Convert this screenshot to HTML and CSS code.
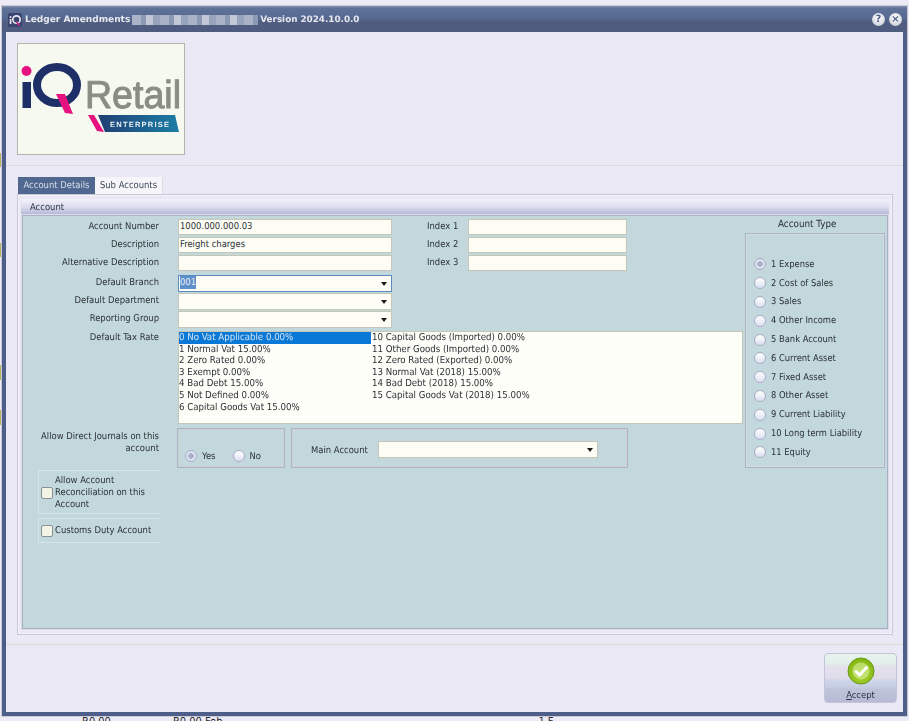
FILE: index.html
```html
<!DOCTYPE html>
<html lang="en">
<head>
<meta charset="utf-8">
<title>Ledger Amendments</title>
<link rel="stylesheet" href="styles.css">
</head>
<body>
<div class="window">
  <header class="titlebar">
    <svg class="app-icon" viewBox="0 0 14 14" width="14" height="14"><rect width="14" height="14" rx="2" fill="#3b4470"/><circle cx="2.5" cy="4" r="1" fill="#e8e8f0"/><rect x="1.7" y="6" width="1.7" height="5" fill="#e8e8f0"/><circle cx="8.5" cy="6.5" r="3.7" fill="none" stroke="#e8e8f0" stroke-width="1.7"/><path d="M8 9l2 3.5h2l-2-3.5z" fill="#e0218a"/></svg>
    <span class="title-text">Ledger Amendments</span>
    <span class="title-blur"></span>
    <span class="title-text title-version">Version 2024.10.0.0</span>
    <span class="title-btn title-help">?</span>
    <span class="title-btn title-close">×</span>
  </header>

  <section class="logo-area">
    <div class="logo">
      <svg viewBox="0 0 166 110" width="166" height="110">
        <defs>
          <linearGradient id="ban" x1="0" x2="1" y1="0" y2="0"><stop offset="0" stop-color="#203f74"/><stop offset="1" stop-color="#1c7ea5"/></linearGradient>
        </defs>
        <circle cx="8.500" cy="27" r="5" fill="#e6127f"/>
        <rect x="4.500" y="38" width="8.500" height="26" fill="#1d2f66"/>
        <ellipse cx="39" cy="41" rx="20" ry="18" fill="none" stroke="#1d2f66" stroke-width="8"/>
        <polygon points="38,50 47,50 55,70 47,69" fill="#e6127f"/>
        <text class="logo-retail" x="67" y="64" textLength="96" lengthAdjust="spacingAndGlyphs">Retail</text>
        <polygon points="70,71 76,71 86,88 79,87" fill="#e6127f"/>
        <polygon points="80,71 157,71 161,88 87,88" fill="url(#ban)"/>
        <text class="logo-ent" x="92" y="82.500" textLength="59">ENTERPRISE</text>
      </svg>
    </div>
  </section>

  <section class="content">
    <nav class="tabs">
      <span class="tab tab-active">Account Details</span>
      <span class="tab">Sub Accounts</span>
    </nav>
    <div class="tab-box">
      <div class="band">Account</div>
      <div class="panel">
        <div class="col-main">
          <div class="row">
            <label class="lbl">Account Number</label>
            <div class="input">1000.000.000.03</div>
            <label class="idx-lbl">Index 1</label>
            <div class="input input-idx"></div>
          </div>
          <div class="row">
            <label class="lbl">Description</label>
            <div class="input">Freight charges</div>
            <label class="idx-lbl">Index 2</label>
            <div class="input input-idx"></div>
          </div>
          <div class="row">
            <label class="lbl">Alternative Description</label>
            <div class="input"></div>
            <label class="idx-lbl">Index 3</label>
            <div class="input input-idx"></div>
          </div>
          <div class="row row-select row-first-select">
            <label class="lbl">Default Branch</label>
            <div class="input select focused"><span class="sel-text">001</span><i class="caret"></i></div>
          </div>
          <div class="row row-select">
            <label class="lbl">Default Department</label>
            <div class="input select"><i class="caret"></i></div>
          </div>
          <div class="row row-select">
            <label class="lbl">Reporting Group</label>
            <div class="input select"><i class="caret"></i></div>
          </div>
          <div class="row row-list">
            <label class="lbl">Default Tax Rate</label>
            <div class="listbox">
              <div class="list-item list-selected">0 No Vat Applicable 0.00%</div>
              <div class="list-item">10 Capital Goods (Imported) 0.00%</div>
              <div class="list-item">1 Normal Vat 15.00%</div>
              <div class="list-item">11 Other Goods (Imported) 0.00%</div>
              <div class="list-item">2 Zero Rated 0.00%</div>
              <div class="list-item">12 Zero Rated (Exported) 0.00%</div>
              <div class="list-item">3 Exempt 0.00%</div>
              <div class="list-item">13 Normal Vat (2018) 15.00%</div>
              <div class="list-item">4 Bad Debt 15.00%</div>
              <div class="list-item">14 Bad Debt (2018) 15.00%</div>
              <div class="list-item">5 Not Defined 0.00%</div>
              <div class="list-item">15 Capital Goods Vat (2018) 15.00%</div>
              <div class="list-item">6 Capital Goods Vat 15.00%</div>
            </div>
          </div>
          <div class="row row-groups">
            <label class="lbl lbl-wrap">Allow Direct Journals on this account</label>
            <div class="group group-yn">
              <span class="radio-item"><i class="radio radio-on"></i>Yes</span>
              <span class="radio-item"><i class="radio"></i>No</span>
            </div>
            <div class="group group-main">
              <label class="main-lbl">Main Account</label>
              <div class="input select input-main"><i class="caret"></i></div>
            </div>
          </div>
          <div class="check-box check-tall"><i class="check"></i><span>Allow Account Reconciliation on this Account</span></div>
          <div class="check-box check-short"><i class="check"></i><span>Customs Duty Account</span></div>
        </div>
        <aside class="col-type">
          <div class="type-title">Account Type</div>
          <div class="type-box">
            <div class="type-item"><i class="radio radio-on"></i>1 Expense</div>
            <div class="type-item"><i class="radio"></i>2 Cost of Sales</div>
            <div class="type-item"><i class="radio"></i>3 Sales</div>
            <div class="type-item"><i class="radio"></i>4 Other Income</div>
            <div class="type-item"><i class="radio"></i>5 Bank Account</div>
            <div class="type-item"><i class="radio"></i>6 Current Asset</div>
            <div class="type-item"><i class="radio"></i>7 Fixed Asset</div>
            <div class="type-item"><i class="radio"></i>8 Other Asset</div>
            <div class="type-item"><i class="radio"></i>9 Current Liability</div>
            <div class="type-item"><i class="radio"></i>10 Long term Liability</div>
            <div class="type-item"><i class="radio"></i>11 Equity</div>
          </div>
        </aside>
      </div>
    </div>
  </section>

  <footer class="footer">
    <button class="accept" type="button">
      <svg viewBox="0 0 28 28" width="28" height="28">
        <defs>
          <radialGradient id="gr" cx="0.5" cy="0.6" r="0.6"><stop offset="0" stop-color="#b4dc3a"/><stop offset="1" stop-color="#7fb30f"/></radialGradient>
        </defs>
        <circle cx="14" cy="14" r="13" fill="url(#gr)" stroke="#6b9a1a"/>
        <circle cx="14" cy="14" r="8.500" fill="#cfe88a" opacity="0.7"/>
        <path d="M9 14.500l3.500 3.500 7-7.500" fill="none" stroke="#fff" stroke-width="3" stroke-linecap="round" stroke-linejoin="round"/>
      </svg>
      <span><u>A</u>ccept</span>
    </button>
  </footer>
</div>
<div class="under">
  <span class="under-a">R0.00</span>
  <span class="under-b">R0.00 Feb</span>
  <span class="under-c">1 F</span>
</div>
</body>
</html>
```
FILE: styles.css
```css
html, body { margin: 0; padding: 0; }
body {
  width: 909px;
  height: 721px;
  overflow: hidden;
  background:
    linear-gradient(transparent 153px, #b8b25e 153px 167px, transparent 167px 243px, #b8b25e 243px 257px, transparent 257px 365px, #b8b25e 365px 380px, transparent 380px 410px, #b8b25e 410px 425px, transparent 425px) 0 0 / 2px 721px no-repeat,
    #ecebf6;
  font-family: "DejaVu Sans Condensed", "DejaVu Sans", sans-serif;
  font-size: 9.400px;
  text-rendering: geometricPrecision;
  color: #2b3135;
}
i { display: block; font-style: normal; }

.window {
  box-sizing: border-box;
  width: 905px;
  height: 710px;
  margin: 6px 0 0 2px;
  border: solid #4d5e88;
  border-width: 0 4px 4px 4px;
  box-shadow: 0 0 0 1px #c9c9d8;
  display: flex;
  flex-direction: column;
  background: repeating-conic-gradient(#edeaf8 0 25%, #e9e7f4 0 50%) 0 0 / 4px 4px;
  filter: blur(0.3px);
}

.titlebar {
  flex: none;
  box-sizing: border-box;
  height: 26px;
  margin: 0 -4px;
  padding: 1px 5px 0 6px;
  display: flex;
  align-items: center;
  background: linear-gradient(#8b98b6 0, #5f7298 2px, #566a92 45%, #505d80 60%, #4e5c7f 100%);
  color: #e6e8ee;
  font-family: "DejaVu Sans", sans-serif;
  font-weight: 700;
  font-size: 9px;
}
.app-icon { margin-right: 3px; }
.title-blur {
  width: 126px;
  height: 10px;
  margin: 0 2px;
  background: repeating-linear-gradient(90deg, #a9b2c6 0 9px, #8d99b3 9px 14px, #c2c8d6 14px 21px, #98a4bc 21px 28px);
}
.title-version { font-size: 8.800px; }
.title-btn {
  width: 13px;
  height: 13px;
  border-radius: 50%;
  background: radial-gradient(circle at 50% 35%, #ffffff, #c2c5cf);
  color: #4d5e88;
  font-size: 10px;
  line-height: 13px;
  text-align: center;
}
.title-help { margin-left: auto; }
.title-close { margin-left: 4px; }

.logo-area {
  flex: none;
  box-sizing: border-box;
  height: 134px;
  padding: 11px 0 0 11px;
  border-bottom: 1px solid #dcdad9;
}
.logo {
  box-sizing: border-box;
  width: 168px;
  height: 112px;
  background: #f6f9f0;
  border: 1px solid #b3b5a8;
}
.logo svg { display: block; }
.logo-retail { font-family: "Liberation Sans", sans-serif; font-size: 39px; fill: #8a8d84; stroke: #8a8d84; stroke-width: 1px; }
.logo-ent { font-family: "Liberation Sans", sans-serif; font-weight: 700; font-size: 7.500px; fill: #e8f2f6; }

.content { flex: none; padding: 11px 10px 0 11px; }
.tabs { display: flex; height: 17px; margin-left: 1px; }
.tab {
  box-sizing: border-box;
  width: 68px;
  padding-top: 3px;
  text-align: center;
  background: #f5f5fa;
  border-right: 1px solid #dcdce8;
  color: #3f4a55;
}
.tab-active { width: 77px; background: #50688f; color: #d9dfea; border: 0; }
.tab-box {
  box-sizing: border-box;
  width: 876px;
  height: 441px;
  padding: 4px 3px 0 3px;
  border: 1px solid #c8c8d6;
  box-shadow: inset 0 0 0 1px #f3f2fa;
}
.band {
  box-sizing: border-box;
  height: 16px;
  padding: 3px 0 0 9px;
  background: linear-gradient(#f2f1fa 0, #dcdcef 50%, #b0b4d2 100%);
  border-radius: 3px 3px 0 0;
  color: #2b3240;
}
.panel {
  box-sizing: border-box;
  width: 866px;
  height: 414px;
  margin-left: 1px;
  display: flex;
  background: #c3d8dd;
  border: 1px solid #a9aec2;
  border-top-color: #aeb2c9;
  box-shadow: 0 0 0 1px #dcdce8;
}

.col-main { width: 722px; flex: none; padding-top: 3px; }
.row { display: flex; align-items: center; height: 16px; margin-bottom: 2px; }
.row-select { height: 17px; margin-bottom: 1px; }
.row-first-select { margin-top: 4px; }
.lbl {
  flex: none;
  box-sizing: border-box;
  width: 136px;
  margin-right: 19px;
  padding-bottom: 2px;
  text-align: right;
}
.input {
  flex: none;
  box-sizing: border-box;
  width: 214px;
  height: 100%;
  padding-left: 1px;
  line-height: 14px;
  background: #fdfdf5;
  border: 1px solid #c4c6b6;
  color: #2b3135;
  position: relative;
}
.input-idx { width: 159px; }
.idx-lbl { flex: none; width: 41px; margin-left: 35px; padding-bottom: 2px; }
.focused { border-color: #5a8cc4; }
.sel-text { display: inline-block; height: 13px; background: #5d8fcb; color: #e9eef5; }
.caret {
  position: absolute;
  right: 4px;
  top: 6px;
  width: 0;
  height: 0;
  border: 3.500px solid transparent;
  border-top: 4px solid #1c1c1c;
  border-bottom: 0;
}
.row-list { align-items: flex-start; height: 93px; margin: 3px 0 0; }
.row-list .lbl { padding-top: 1px; }
.listbox {
  flex: none;
  box-sizing: border-box;
  width: 565px;
  height: 93px;
  display: grid;
  grid-template-columns: 193px 1fr;
  grid-auto-rows: 11.600px;
  background: #fefef8;
  border: 1px solid #c4c6b6;
  font-size: 9.600px;
  line-height: 11.600px;
}
.list-item { white-space: nowrap; }
.list-selected { background: #0a78d7; color: #d5e6f5; margin-right: 1px; }

.row-groups { align-items: flex-start; height: 40px; margin: 4px 0 2px; }
.lbl-wrap { padding-top: 3px; line-height: 12px; }
.group {
  flex: none;
  box-sizing: border-box;
  height: 40px;
  display: flex;
  border: 1px solid #aeb2cf;
  outline: 1px solid #cdd2c8;
  outline-offset: -2px;
}
.group-yn { width: 108px; margin-left: -1px; margin-right: 6px; padding: 19px 0 0 7px; gap: 17px; }
.group-main { width: 337px; padding: 12px 0 0 19px; }
.main-lbl { flex: none; width: 67px; padding-top: 4px; }
.input-main { width: 220px; height: 17px; }
.radio-item { display: flex; align-items: center; height: 16px; gap: 5px; }
.radio {
  flex: none;
  box-sizing: border-box;
  width: 12px;
  height: 12px;
  border-radius: 50%;
  border: 1px solid #a8adc4;
  background: linear-gradient(#ffffff, #dcdff0);
}
.radio-on { background: radial-gradient(circle, #a9adc6 0 2.500px, #dfe2f0 3px); }

.check-box {
  box-sizing: border-box;
  width: 122px;
  margin-left: 15px;
  display: flex;
  align-items: center;
  gap: 2px;
  padding-left: 2px;
  border: 1px solid #d5e4e6;
  border-width: 1px 0 1px 1px;
  line-height: 11.700px;
}
.check-tall { height: 44px; padding-top: 2px; }
.check-short { height: 25px; margin-top: 4px; padding-top: 1px; white-space: nowrap; }
.check {
  flex: none;
  box-sizing: border-box;
  width: 12px;
  height: 12px;
  border-radius: 2px;
  border: 1px solid #8b9092;
  background: #f3f3e6;
}

.col-type { width: 140px; flex: none; }
.type-title { box-sizing: border-box; height: 17px; padding: 3px 0 0 33px; font-size: 9.800px; white-space: nowrap; }
.type-box {
  box-sizing: border-box;
  height: 235px;
  padding-top: 21px;
  border: 1px solid #aeb2c9;
  outline: 1px solid #d4dce0;
  outline-offset: -2px;
}
.type-item {
  display: flex;
  align-items: center;
  gap: 5px;
  height: 18.800px;
  padding-left: 8px;
  white-space: nowrap;
  font-size: 9.300px;
}

.footer {
  flex: 1;
  margin-top: 9px;
  padding: 8px 6px 0 0;
  display: flex;
  justify-content: flex-end;
  align-items: flex-start;
  border-top: 1px solid #dcdad0;
}
.accept {
  box-sizing: border-box;
  width: 73px;
  height: 50px;
  padding: 3px 0 0;
  display: flex;
  flex-direction: column;
  align-items: center;
  gap: 4px;
  font: inherit;
  color: #2b3240;
  border: 1px solid #c2c5d8;
  border-radius: 4px;
  background: linear-gradient(#e8f3ee 0, #e2eee9 20%, #e4e0ec 26%, #e0dcea 50%, #ccd4e8 56%, #c8cfe4 66%, #bfc3da 74%, #b6bad4 100%);
}
.accept u { text-decoration: underline; }

.under {
  height: 12px;
  display: flex;
  font-size: 11px;
  line-height: 12px;
  color: #2a2a30;
  white-space: nowrap;
}
.under-a { margin-left: 82px; }
.under-b { margin-left: 62px; }
.under-c { margin-left: 316px; }
```
